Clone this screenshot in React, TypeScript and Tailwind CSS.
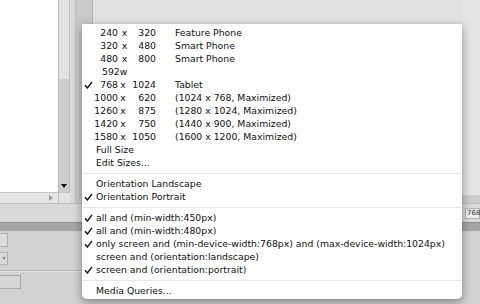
import React from "react";

const font = { fontFamily: '"DejaVu Sans", Verdana, sans-serif' };

type SizeRow = { a: string; b: string; label?: string; checked?: boolean };

const sizes: SizeRow[] = [
  { a: "240", b: "320", label: "Feature Phone" },
  { a: "320", b: "480", label: "Smart Phone" },
  { a: "480", b: "800", label: "Smart Phone" },
  { a: "768", b: "1024", label: "Tablet", checked: true },
  { a: "1000", b: "620", label: "(1024 x 768, Maximized)" },
  { a: "1260", b: "875", label: "(1280 x 1024, Maximized)" },
  { a: "1420", b: "750", label: "(1440 x 900, Maximized)" },
  { a: "1580", b: "1050", label: "(1600 x 1200, Maximized)" },
];

function Check({ on }: { on?: boolean }) {
  return (
    <span className="w-[14px] shrink-0 flex items-center justify-end pr-[3px]">
      {on ? (
        <svg width="9" height="8" viewBox="0 0 9 8">
          <path d="M1 4.3 L3.4 7 L8 0.8" fill="none" stroke="#111" strokeWidth="1.4" />
        </svg>
      ) : null}
    </span>
  );
}

function Row({ on, children }: { on?: boolean; children: React.ReactNode }) {
  return (
    <div className="h-[13px] flex items-center leading-[13px] whitespace-nowrap">
      <Check on={on} />
      {children}
    </div>
  );
}

function Sep() {
  return (
    <div className="h-[8px] flex items-center">
      <div className="h-px w-full bg-[#e3e3e3]" />
    </div>
  );
}

function SizeLine({ s, shift }: { s: SizeRow; shift?: boolean }) {
  return (
    <Row on={s.checked}>
      <span className="w-[22px] shrink-0 flex justify-end">{s.a}</span>
      <span className={shift ? "w-[10px] shrink-0 text-center pl-[3px]" : "w-[10px] shrink-0 text-center"}>x</span>
      <span className="w-[28px] shrink-0 flex justify-end">{s.b}</span>
      <span className="ml-[19px]">{s.label}</span>
    </Row>
  );
}

export default function App() {
  return (
    <div className="relative w-[480px] h-[304px] overflow-hidden bg-[#d4d4d4]" style={font}>
      {/* background application */}
      <div className="flex flex-col h-full">
        <div className="flex h-[203px]">
          {/* document view */}
          <div className="w-[58px] flex flex-col">
            <div className="flex-1 bg-white" />
            <div className="h-[11px] bg-[#e6e6e6] border-t border-[#c4c4c4] flex items-center justify-end pr-[5px]">
              <svg width="4" height="6" viewBox="0 0 4 6">
                <path d="M0 0 L4 3 L0 6 Z" fill="#9a9a9a" />
              </svg>
            </div>
          </div>
          {/* vertical scrollbar */}
          <div className="w-[12px] flex flex-col border-l border-[#b9b9b9]">
            <div className="h-[79px] bg-[#e2e2e2] border-r border-[#c2c2c2]" />
            <div className="flex-1 bg-[#cdcdcd] border-r border-[#bcbcbc] flex flex-col justify-end items-center pb-[4px]">
              <svg width="6" height="4" viewBox="0 0 6 4">
                <path d="M0 0 L6 0 L3 4 Z" fill="#111" />
              </svg>
            </div>
            <div className="h-[11px] bg-[#e4e4e4] border-t border-[#c4c4c4]" />
          </div>
          <div className="w-[6px] bg-[#dadada] border-r border-[#bdbdbd]" />
          <div className="w-[17px] bg-[#c9c9c9] border-r border-[#b5b5b5]" />
          <div className="flex-1 bg-[#e1e1e1]" />
          <div className="w-[18px] flex flex-col">
            <div className="flex-1 bg-[#e4e4e4]" />
            <div className="h-[8px] bg-[#cbcbcb]" />
          </div>
        </div>
        {/* status bar */}
        <div className="h-[19px] bg-[#d9d9d9] border-t border-[#bdbdbd] flex items-center justify-end">
          <div className="w-[15px] h-[11px] bg-[#efefef] border border-[#b5b5b5] text-[7px] leading-[9px] text-[#333] pl-[1px]">768</div>
        </div>
        {/* panel header */}
        <div className="h-[9px] bg-[#a6a6a6] border-t border-[#8e8e8e]" />
        {/* properties panel */}
        <div className="flex-1 bg-[#d2d2d2]">
          <div className="w-[82px] flex flex-col pt-[2px]">
            <div className="h-[14px] w-[8px] bg-[#dcdcdc] border border-l-0 border-[#ababab]" />
            <div className="h-[5px]" />
            <div className="h-[13px] w-[8px] bg-[#d8d8d8] border border-l-0 border-[#b0b0b0] flex items-center justify-end pr-[1px]">
              <svg width="4" height="3" viewBox="0 0 4 3">
                <path d="M0 0 L4 0 L2 3 Z" fill="#888" />
              </svg>
            </div>
            <div className="h-[5px]" />
            <div className="h-px bg-[#b4b4b4]" />
            <div className="h-px bg-[#e2e2e2]" />
            <div className="h-[3px]" />
            <div className="h-[14px] w-[21px] bg-[#d6d6d6] border border-l-0 border-[#a8a8a8]" />
          </div>
        </div>
      </div>

      {/* popup menu */}
      <div className="absolute left-[82px] top-[24px] w-[380px] bg-[#fefefe] rounded-b-[5px] shadow-[0_3px_10px_rgba(0,0,0,0.4)] pt-[2px] pb-[2px] text-[9.3px] text-[#111]">
        {sizes.slice(0, 3).map((s, i) => (
          <SizeLine key={i} s={s} shift />
        ))}
        <Row>
          <span className="ml-[6px]">592w</span>
        </Row>
        {sizes.slice(3).map((s, i) => (
          <SizeLine key={i} s={s} />
        ))}
        <Row>Full Size</Row>
        <Row>Edit Sizes...</Row>
        <Sep />
        <Row>Orientation Landscape</Row>
        <Row on>Orientation Portrait</Row>
        <Sep />
        <Row on>all and (min-width:450px)</Row>
        <Row on>all and (min-width:480px)</Row>
        <Row on>only screen and (min-device-width:768px) and (max-device-width:1024px)</Row>
        <Row>screen and (orientation:landscape)</Row>
        <Row on>screen and (orientation:portrait)</Row>
        <Sep />
        <Row>Media Queries...</Row>
      </div>
    </div>
  );
}
